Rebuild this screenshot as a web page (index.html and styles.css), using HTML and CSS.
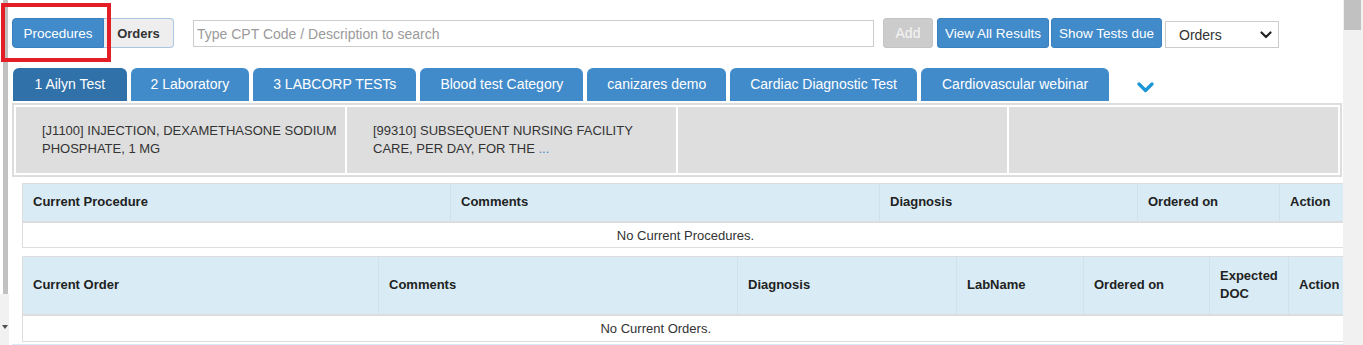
FILE: index.html
```html
<!DOCTYPE html>
<html lang="en">
<head>
<meta charset="utf-8">
<title>Procedures</title>
<link rel="stylesheet" href="styles.css">
</head>
<body>
<div class="screen">
  <div class="lscroll">
    <div class="lthumb"></div>
    <div class="ltrack"><span class="larrow"></span></div>
  </div>
  <div class="main">
    <div class="toolbar">
      <div class="seg">
        <button class="seg-btn seg-active">Procedures</button><button class="seg-btn seg-idle">Orders</button>
      </div>
      <input class="search" type="text" placeholder="Type CPT Code / Description to search">
      <button class="btn btn-disabled">Add</button>
      <button class="btn btn-primary btn-view">View All Results</button>
      <button class="btn btn-primary btn-due">Show Tests due</button>
      <div class="select">
        <span>Orders</span>
        <svg class="select-caret" width="12" height="8" viewBox="0 0 12 8"><polyline points="1.5,1.5 6,6 10.5,1.5" fill="none" stroke="#222" stroke-width="2.2" stroke-linecap="round" stroke-linejoin="round"/></svg>
      </div>
    </div>

    <div class="tabs">
      <div class="tab tab-active">1 Ailyn Test</div>
      <div class="tab">2 Laboratory</div>
      <div class="tab">3 LABCORP TESTs</div>
      <div class="tab">Blood test Category</div>
      <div class="tab">canizares demo</div>
      <div class="tab">Cardiac Diagnostic Test</div>
      <div class="tab">Cardiovascular webinar</div>
      <svg class="tabs-more" width="17" height="11" viewBox="0 0 17 11"><polyline points="2,2 8.5,8.5 15,2" fill="none" stroke="#1a96d6" stroke-width="3.2" stroke-linecap="round" stroke-linejoin="round"/></svg>
    </div>

    <div class="cards">
      <div class="card"><div class="card-text">[J1100] INJECTION, DEXAMETHASONE SODIUM<br>PHOSPHATE, 1 MG</div></div>
      <div class="card"><div class="card-text">[99310] SUBSEQUENT NURSING FACILITY<br>CARE, PER DAY, FOR THE <a class="more-link">...</a></div></div>
      <div class="card"></div>
      <div class="card"></div>
    </div>

    <table class="grid grid-proc">
      <colgroup>
        <col class="w428"><col class="w429"><col class="w258"><col class="w142"><col class="w69">
      </colgroup>
      <thead>
        <tr><th>Current Procedure</th><th>Comments</th><th>Diagnosis</th><th>Ordered on</th><th>Action</th></tr>
      </thead>
      <tbody>
        <tr><td colspan="5" class="empty">No Current Procedures.</td></tr>
      </tbody>
    </table>

    <table class="grid grid-order">
      <colgroup>
        <col class="w356"><col class="w359"><col class="w219"><col class="w127"><col class="w126"><col class="w79"><col class="w60">
      </colgroup>
      <thead>
        <tr><th>Current Order</th><th>Comments</th><th>Diagnosis</th><th>LabName</th><th>Ordered on</th><th>Expected DOC</th><th>Action</th></tr>
      </thead>
      <tbody>
        <tr><td colspan="6" class="empty">No Current Orders.</td><td class="blank"></td></tr>
      </tbody>
    </table>

    <div class="next-band"></div>
  </div>
  <div class="rscroll"><div class="rthumb"></div></div>
</div>
<div class="highlight"></div>
</body>
</html>
```

FILE: styles.css
```css
* {
  box-sizing: border-box;
}

html, body {
  margin: 0;
  padding: 0;
  background: #ffffff;
  font-family: "Liberation Sans", Arial, sans-serif;
  color: #333333;
  overflow: hidden;
}

.screen {
  position: relative;
  display: flex;
  width: 1363px;
  height: 345px;
  overflow: hidden;
}

/* left pane scrollbar */
.lscroll {
  width: 12px;
  flex: 0 0 12px;
  display: flex;
  flex-direction: column;
}

.lthumb {
  margin-left: 3px;
  width: 5px;
  height: 294px;
  background: #c1c1c1;
}

.ltrack {
  flex: 1;
  width: 9px;
  background: #f1f1f1;
  position: relative;
}

.larrow {
  position: absolute;
  left: 2px;
  top: 31px;
  width: 0;
  height: 0;
  border-left: 3px solid transparent;
  border-right: 3px solid transparent;
  border-top: 4px solid #505050;
}

/* main content */
.main {
  flex: 1 1 auto;
  min-width: 0;
  overflow: hidden;
}

.toolbar {
  display: flex;
  align-items: flex-start;
  padding-top: 18px;
}

.seg {
  display: flex;
}

.seg-btn {
  height: 30px;
  padding: 0;
  font-family: "Liberation Sans", Arial, sans-serif;
  cursor: pointer;
}

.seg-active {
  width: 92px;
  font-size: 13.5px;
  background: #428bca;
  color: #ffffff;
  border: 1px solid #3a7fbd;
  border-radius: 4px 0 0 4px;
}

.seg-idle {
  width: 70px;
  font-size: 13px;
  background: #eeeeee;
  color: #333333;
  font-weight: bold;
  border: 1px solid #a9c5e2;
  border-left: none;
  border-radius: 0 4px 4px 0;
}

.search {
  margin: 2px 0 0 19px;
  width: 681px;
  height: 27px;
  border: 1px solid #cccccc;
  border-radius: 0;
  padding: 0 3px;
  font-family: "Liberation Sans", Arial, sans-serif;
  font-size: 14px;
  color: #333333;
  outline: none;
}

.search::placeholder {
  color: #9a9a9a;
}

.btn {
  height: 30px;
  border-radius: 3px;
  font-family: "Liberation Sans", Arial, sans-serif;
  font-size: 13.5px;
  color: #ffffff;
  padding: 0;
  cursor: pointer;
}

.btn-disabled {
  margin-left: 9px;
  width: 50px;
  font-size: 14px;
  background: #cccccc;
  border: 1px solid #c4c4c4;
  color: #f5f5f5;
}

.btn-primary {
  background: #428bca;
  border: 1px solid #3a81c0;
}

.btn-view {
  margin-left: 4px;
  width: 112px;
}

.btn-due {
  margin-left: 2px;
  width: 111px;
}

.select {
  margin: 3px 0 0 3px;
  width: 114px;
  height: 27px;
  border: 1px solid #cccccc;
  background: #ffffff;
  display: flex;
  align-items: center;
  justify-content: space-between;
  padding: 1px 6px 0 13px;
  font-size: 14px;
  color: #333333;
}

.select-caret {
  display: block;
}

/* tabs */
.tabs {
  display: flex;
  align-items: flex-start;
  gap: 4px;
  height: 33px;
  margin: 20px 0 0 1px;
}

.tab {
  height: 33px;
  line-height: 33px;
  padding: 0 20px;
  background: #428bca;
  color: #ffffff;
  font-size: 14px;
  white-space: nowrap;
  border-radius: 6px 6px 0 0;
}

.tab:first-child {
  padding: 0 21.5px;
}

.tab:nth-child(7) {
  padding: 0 21px;
}

.tab-active {
  background: #3071a9;
}

.tabs-more {
  display: block;
  margin: 14px 0 0 24px;
}

/* procedure cards */
.cards {
  margin-top: 2px;
  width: 1330px;
  border: 2px solid #dddddd;
  padding: 2px;
  display: grid;
  grid-template-columns: repeat(4, 1fr);
  gap: 2px;
  background: #ffffff;
}

.card {
  height: 66px;
  background: #dedede;
  display: flex;
  align-items: center;
  padding: 0 0 0 26px;
  overflow: hidden;
}

.card-text {
  font-size: 13px;
  line-height: 18px;
  color: #333333;
  white-space: nowrap;
}

.more-link {
  color: #428bca;
  cursor: pointer;
}

/* tables */
.grid {
  border-collapse: collapse;
  table-layout: fixed;
  width: 1326px;
  margin-left: 10px;
  border: 1px solid #dddddd;
  font-size: 13px;
}

.grid-proc {
  margin-top: 6px;
}

.grid-order {
  margin-top: 8px;
}

.grid th {
  background: #d9ecf5;
  color: #222222;
  font-weight: bold;
  text-align: left;
  vertical-align: middle;
  padding: 0 10px;
  line-height: 18px;
  border-left: 1px solid #d2e1ea;
  border-bottom: 2px solid #dddddd;
}

.grid th:first-child {
  border-left: none;
}

.grid-proc th {
  height: 38px;
}

.grid-order th {
  height: 58px;
}

.grid td {
  background: #ffffff;
  padding: 0;
  border-bottom: 1px solid #dddddd;
}

.grid-proc td {
  height: 26px;
  padding-top: 2px;
}

.grid-order td {
  height: 27px;
}

.empty {
  text-align: center;
  color: #333333;
}

.w428 { width: 428px; }
.w429 { width: 429px; }
.w258 { width: 258px; }
.w142 { width: 142px; }
.w69 { width: 69px; }
.w356 { width: 356px; }
.w359 { width: 359px; }
.w219 { width: 219px; }
.w127 { width: 127px; }
.w126 { width: 126px; }
.w79 { width: 79px; }
.w60 { width: 60px; }

.next-band {
  margin-top: 2px;
  width: 1340px;
  height: 20px;
  background: #d9ecf5;
}

/* right page scrollbar */
.rscroll {
  width: 20px;
  flex: 0 0 20px;
  background: #f1f1f1;
  padding: 0 2px 0 1px;
}

.rthumb {
  height: 30px;
  background: #c1c1c1;
}

/* annotation rectangle */
.highlight {
  position: absolute;
  left: 1px;
  top: 3px;
  width: 110px;
  height: 59px;
  border: 4px solid #e41e26;
  pointer-events: none;
}
```
